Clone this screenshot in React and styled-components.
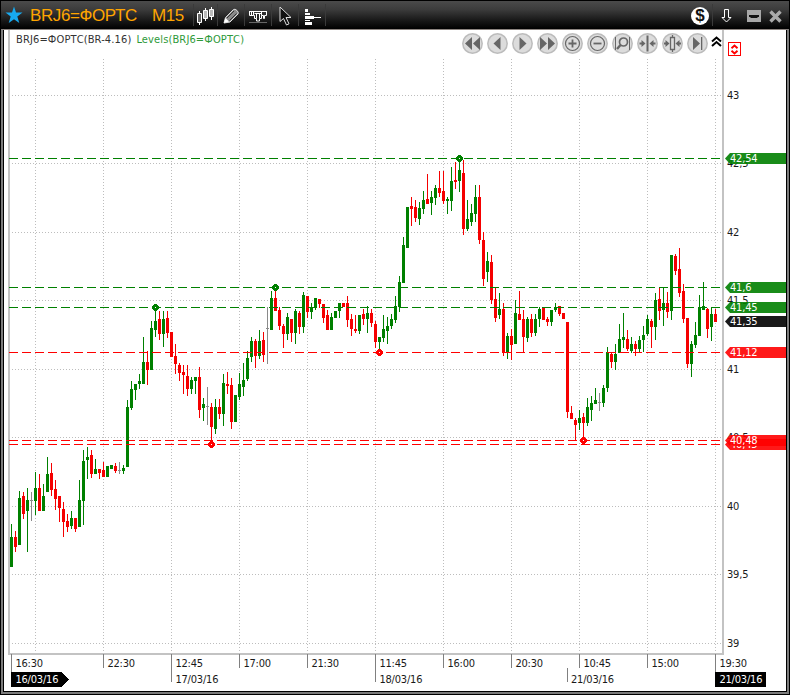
import React from 'react'
import styled, { createGlobalStyle } from 'styled-components'

const COLORS = {
  up: '#008000',
  down: '#f50000',
  flat: '#8a8a8a',
  grid: '#bdbdbd',
  axis: '#c3c3c3',
  orange: '#ffa500',
}

const GlobalStyle = createGlobalStyle`
  body {
    margin: 0;
    background: #000;
  }
  * {
    box-sizing: border-box;
  }
`

const Frame = styled.div`
  width: 790px;
  height: 695px;
  padding: 1px;
  background: #000;
  font-family: 'DejaVu Sans Condensed', 'DejaVu Sans', sans-serif;
`

const TitleBar = styled.header`
  display: flex;
  align-items: center;
  height: 28px;
  padding: 0 7px 0 4px;
  background: linear-gradient(#4b4b4b 0%, #3c3c3c 30%, #1c1c1c 65%, #000 100%);
`

const Title = styled.span`
  width: ${props => props.$width}px;
  margin-left: ${props => props.$gap}px;
  padding-top: 2px;
  color: ${COLORS.orange};
  font: 17px/28px 'Liberation Sans', Arial, sans-serif;
  letter-spacing: ${props => props.$spacing}px;
  white-space: nowrap;
`

const ToolCell = styled.div`
  display: flex;
  align-items: center;
  justify-content: center;
  width: ${props => props.$width || 27}px;
  height: 22px;
  padding-top: 2px;
  border-left: 1px solid #3a3a3a;
`

const Spacer = styled.div`
  flex: 1;
`

const WindowButtons = styled.div`
  display: flex;
  align-items: center;
  gap: 8px;
  margin-left: 7px;
  padding-top: 2px;
`

const Body = styled.main`
  position: relative;
  height: 665px;
  border: 2px solid #7c7c7c;
  border-top: 1px solid #8c8480;
  padding: 0 1px 1px;
`

const Sheet = styled.div`
  height: 661px;
  background: #fff;
`

const Legend = styled.div`
  position: absolute;
  top: 2px;
  left: 13px;
  display: flex;
  gap: 5px;
  font-size: 11px;
  line-height: 16px;
  white-space: nowrap;
`

const LegendItem = styled.span`
  color: ${props => props.$color};
  letter-spacing: ${props => props.$spacing}px;
`

const Controls = styled.div`
  position: absolute;
  top: 3px;
  left: 459px;
  display: flex;
  align-items: flex-start;
`

const RoundButton = styled.button`
  display: block;
  width: 21px;
  height: 21px;
  margin: 0 4px 0 0;
  padding: 0;
  border: 0;
  background: none;
`

const Collapse = styled.svg`
  margin: 3px 0 0 -1px;
`

const AxisText = styled.text`
  fill: ${props => props.$color || '#1a1a1a'};
  font-size: 11px;
  letter-spacing: -0.2px;
`

const PLOT_BOTTOM = 653
const TOP_PRICE = 43
const TOP_Y = 95
const POINTS_PER_UNIT = 137

const priceToY = price => Math.floor(TOP_Y + (TOP_PRICE - price) * POINTS_PER_UNIT + 0.3)

// g - up, r - down, n - unchanged; then high, body top, body bottom, low
const CANDLES = `
g524,537,567,567 r531,537,547,552 g491,498,545,545 r492,496,514,519 g488,500,511,552
n492,500,501,521 g472,488,501,515 r474,488,511,511 g484,496,511,511 g457,474,492,492
r463,473,490,496 r480,489,499,510 r496,496,508,522 r502,509,522,537 r514,521,527,532
g511,518,526,529 r518,518,529,532 g480,500,527,527 g450,461,501,525 g447,457,460,479
r450,455,474,478 g459,469,474,474 r469,469,473,479 r462,470,477,477 g466,466,477,477
g465,465,469,469 r463,466,471,473 n462,470,471,474 g465,468,471,474 g400,407,467,467
g381,389,408,410 g384,384,390,400 g374,381,384,389 g337,362,384,384 r351,362,370,385
g321,328,370,370 g307,321,330,337 r311,319,334,340 g311,319,334,347 r311,318,333,338
r332,332,357,357 r344,356,364,374 r363,365,373,381 r365,372,375,394 r365,376,389,396
g377,380,389,394 g377,377,381,394 r367,377,410,418 g398,404,408,421 n387,406,407,425
r403,407,427,443 g399,407,429,434 r399,407,414,419 g374,383,414,426 r372,384,386,394
r378,385,422,429 g395,395,422,422 g373,384,397,400 g363,380,387,396 g351,358,379,381
g337,341,357,362 r339,341,356,368 g330,341,356,359 r332,340,355,362 n307,328,329,364
g291,298,330,330 r287,298,311,311 r307,310,326,330 r324,326,334,348 g313,317,334,340
r319,319,333,342 g309,311,333,344 r311,313,327,334 g292,295,327,333 r296,296,312,318
g303,307,312,319 g298,298,308,310 r299,299,304,308 r304,304,318,323 r310,315,330,330
g313,317,330,330 g311,311,318,318 g303,303,311,318 r303,303,307,307 r296,303,320,327
r314,319,329,336 r315,329,331,333 g315,315,331,334 r309,314,319,325 g306,313,319,333
r309,313,323,327 r321,324,342,348 g337,337,342,352 g315,329,338,342 g317,326,331,344
g314,319,326,329 g296,306,320,323 g276,282,307,312 g237,245,283,283 g207,207,248,248
r197,206,209,226 r200,207,218,222 g202,208,219,225 g191,200,209,214 r174,199,204,204
g191,197,203,215 g185,188,198,205 r171,188,193,197 r171,191,201,204 g197,199,201,214
g167,181,201,211 r162,180,182,189 g158,170,181,192 r160,173,229,235 g200,219,229,231
g204,213,222,226 g185,197,214,222 r185,197,240,244 r232,240,279,286 g252,261,272,282
r255,262,300,304 r288,299,318,322 g293,309,315,319 r303,309,353,356 g333,336,352,359
r329,336,345,360 g300,313,344,344 r291,314,320,320 r310,319,337,352 g317,319,338,342
r314,319,333,337 g314,319,333,336 g307,309,319,327 r307,307,320,320 r317,319,322,326
g310,310,322,326 g303,307,310,312 r306,306,314,316 r313,313,319,319 r322,322,412,418
r406,413,419,419 r418,420,425,440 g410,418,423,430 r413,417,423,440 g398,407,423,426
g396,403,410,421 g388,400,404,404 n393,402,403,411 g385,388,403,407 g347,352,388,392
r353,354,362,368 g344,354,362,370 g324,339,353,353 g313,337,340,348 r330,339,349,351
g337,344,351,353 r341,344,349,356 g336,340,349,352 g326,335,340,352 g315,319,334,336
r319,321,327,348 g293,300,327,340 r287,299,311,320 g287,303,310,326 r292,303,312,318
g255,255,311,320 r254,256,271,275 r248,269,293,297 r284,291,319,323 r318,318,364,368
g341,344,364,377 g322,335,345,348 g295,307,336,336 g282,306,310,310 r308,309,329,338
g308,314,327,341 r309,314,322,322
`.trim().split(/\s+/).map(item => {
  const [high, top, bottom, low] = item.slice(1).split(',').map(Number)
  return { kind: item[0], high, top, bottom, low }
})

const CANDLE_COLORS = { g: COLORS.up, r: COLORS.down, n: COLORS.flat }

const PRICES = [43, 42.5, 42, 41.5, 41, 40.5, 40, 39.5, 39]
const GRID_X = [35, 103, 171, 239, 307, 375, 443, 511, 579, 647, 715]

const LEVELS = [
  { price: 42.54, color: '#008000', x: 459 },
  { price: 41.6, color: '#008000', x: 275 },
  { price: 41.45, color: '#008000', x: 155 },
  { price: 41.35, color: '#000000', noLine: true },
  { price: 41.12, color: '#ff0000', x: 379 },
  { price: 40.45, color: '#ff0000', x: 211 },
  { price: 40.48, color: '#ff0000', x: 583 },
]

const TIMES = [
  { x: 11, time: '16:30' },
  { x: 103, time: '22:30' },
  { x: 171, time: '12:45', date: '17/03/16' },
  { x: 239, time: '17:00' },
  { x: 307, time: '21:30' },
  { x: 375, time: '11:45', date: '18/03/16' },
  { x: 443, time: '16:00' },
  { x: 511, time: '20:30' },
  { x: 579, time: '10:45' },
  { x: 647, time: '15:00' },
  { x: 715, time: '19:30' },
]

const formatPrice = price => String(price).replace('.', ',')

const Grid = () => (
  <g stroke={COLORS.grid} strokeDasharray="1 2">
    {PRICES.map(price => (
      <line key={price} x1="9" x2="722" y1={priceToY(price) + 0.5} y2={priceToY(price) + 0.5} />
    ))}
    {GRID_X.map(x => (
      <line key={x} x1={x + 0.5} x2={x + 0.5} y1="59" y2={PLOT_BOTTOM} />
    ))}
  </g>
)

const Candle = ({ x, kind, high, top, bottom, low }) => (
  <g fill={CANDLE_COLORS[kind]}>
    <rect x={x} y={high} width="1" height={low - high} />
    <rect x={x - 1} y={top} width="3" height={bottom - top} />
  </g>
)

const LevelLine = ({ price, color, x }) => {
  const y = priceToY(price)
  return (
    <g>
      <line x1="9" x2="722" y1={y + 0.5} y2={y + 0.5} stroke={color} strokeDasharray="9 4" />
      <path d={`M${x - 1} ${y - 3}h3v1h1v1h1v3h-1v1h-1v1h-3v-1h-1v-1h-1v-3h1v-1h1z`} fill={color} />
      <rect x={x} y={y} width="1" height="1" fill="#fff" />
    </g>
  )
}

const PriceTag = ({ price, color }) => {
  const y = priceToY(price)
  return (
    <g>
      <path d={`M725 ${y + 0.5}l5 -5.5h56v11h-56z`} fill={color} fillOpacity="0.9" />
      <AxisText x="730" y={y + 4} $color="#fff">{formatPrice(price)}</AxisText>
    </g>
  )
}

const TimeAxis = () => (
  <g shapeRendering="crispEdges">
    {TIMES.map(({ x, time, date }) => (
      <g key={x}>
        <rect x={x} y="654" width="1" height={date ? 28 : 14} fill="#808080" />
        <AxisText x={x + 4.4} y="667">{time}</AxisText>
        {date && <AxisText x={x + 4.4} y="683">{date}</AxisText>}
      </g>
    ))}
    <rect x="11" y="668" width="1" height="4" fill="#808080" />
    <rect x="715" y="668" width="1" height="4" fill="#808080" />
    <rect x="567" y="668" width="1" height="14" fill="#808080" />
    <AxisText x="571" y="683">21/03/16</AxisText>
    <path d="M11 672h51l7 7.5l-7 7.5h-51z" fill="#000" />
    <AxisText x="15.4" y="683" $color="#fff">16/03/16</AxisText>
    <rect x="715" y="672" width="51" height="15" fill="#000" />
    <AxisText x="719.4" y="683" $color="#fff">21/03/16</AxisText>
  </g>
)

const Chart = () => (
  <svg width="782" height="661" viewBox="4 30 782 661" display="block">
    <Grid />
    <path d="M8 30h2v623h712v-623h2v625h-716z" fill={COLORS.axis} />
    <g shapeRendering="crispEdges">
      {CANDLES.map((candle, i) => <Candle key={i} x={11 + i * 4} {...candle} />)}
    </g>
    {LEVELS.filter(level => !level.noLine).map(level => <LevelLine key={level.price} {...level} />)}
    {PRICES.map(price => (
      <AxisText key={price} x="727" y={priceToY(price) + 4}>{formatPrice(price)}</AxisText>
    ))}
    {LEVELS.map(level => <PriceTag key={level.price} {...level} />)}
    <TimeAxis />
    <g fill="none" stroke="#f00">
      <rect x="728.5" y="42.5" width="12" height="13" />
      <path d="M731.5 48.300l3 -2.800l3 2.800M731.5 50.700l3 2.800l3 -2.800" strokeWidth="1.9" />
    </g>
  </svg>
)

const GLYPHS = {
  rewind: <path d="M10 4v13L3 10.500zM18 4v13L11 10.500z" />,
  back: <path d="M13.500 4v13L6.500 10.500z" />,
  forward: <path d="M7.500 4v13L14.500 10.500z" />,
  fastForward: <path d="M3 4v13L10 10.500zM11 4v13L18 10.500z" />,
  zoomIn: (
    <g fill="none" stroke="#666">
      <circle cx="10.5" cy="10.5" r="7" strokeWidth="1.2" />
      <path d="M6.500 10.500h8M10.500 6.500v8" strokeWidth="1.8" />
    </g>
  ),
  zoomOut: (
    <g fill="none" stroke="#666">
      <circle cx="10.5" cy="10.5" r="7" strokeWidth="1.2" />
      <path d="M6.500 10.500h8" strokeWidth="1.8" />
    </g>
  ),
  zoomArea: (
    <g fill="none" stroke="#666">
      <path d="M3.500 4v13M17.500 4v13" />
      <circle cx="11.500" cy="9" r="4" strokeWidth="1.7" />
      <path d="M8.500 12l-3.500 4" strokeWidth="2.4" />
    </g>
  ),
  squeeze: (
    <>
      <path d="M9.500 2.500h2v16h-2z" />
      <path d="M2.500 9.500h2v-2.500l4 3.500l-4 3.500v-2.500h-2zM18.500 9.500h-2v-2.500l-4 3.500l4 3.500v-2.500h2z" />
    </>
  ),
  squeezeBar: (
    <>
      <path d="M8.500 4.500h4v12h-4zM10.500 2v2.500M10.500 16.500v2.500" fill="none" stroke="#666" strokeWidth="1.300" />
      <path d="M2 9.500h1.500v-2.500l4 3.500l-4 3.500v-2.500h-1.500zM19 9.500h-1.500v-2.500l-4 3.500l4 3.500v-2.500h1.500z" />
    </>
  ),
  toEnd: <path d="M6 4v13L13 10.500zM14 4h1.300v13h-1.300z" />,
}

const NavButton = ({ name }) => (
  <RoundButton aria-label={name}>
    <svg width="21" height="21" display="block">
      <circle cx="10.500" cy="10.500" r="9.700" fill="#dcdcdc" stroke="#bcbcbc" strokeWidth="1.500" />
      <g fill="#666">{GLYPHS[name]}</g>
    </svg>
  </RoundButton>
)

const CollapseIcon = () => (
  <Collapse width="11" height="11" viewBox="0 0 11 11" fill="none" stroke="#000" strokeWidth="2">
    <path d="M1 5.500L5.500 1.500L10 5.500M1 10L5.500 6L10 10" />
  </Collapse>
)

const StarIcon = () => (
  <svg width="18" height="18" viewBox="0 0 18 18">
    <path d="M9 .5l2 6h6.500l-5.200 4l2 6.500l-5.300-3.800l-5.300 3.800l2-6.500l-5.200-4h6.500z" fill="#17aaf0" />
  </svg>
)

const CandlesIcon = () => (
  <svg width="17" height="18" viewBox="0 0 17 18" fill="#666" stroke="#fff">
    <path d="M2.500 4v14M8.500 1v13M14.500 0v13" />
    <path d="M.5 6.500h4v9h-4z" />
    <path d="M6.500 3.500h4v8h-4zM12.500 2.500h4v7h-4z" fill="#bbb" />
  </svg>
)

const PencilIcon = () => (
  <svg width="16" height="16" viewBox="0 0 16 16">
    <path d="M1 15l1.500-5.500l8-8q1.500-1 3.500 1t1 3.500l-8 8z" fill="#8a8a8a" stroke="#ddd" />
    <path d="M4 10l7-7M6.500 12.500l7-7" stroke="#333" />
    <path d="M1 15l1.500-5l3.500 3.500z" fill="#fff" />
  </svg>
)

const ProfileIcon = () => (
  <svg width="18" height="13" viewBox="0 0 18 13" fill="none" stroke="#fff">
    <path d="M0 1.500h18M.5 1v4.500h4v-4M2.500 1.500v4M4.500 5.500h1v3h2v2.500h3v-2.500h2v-3M7.500 3.500v5M10.500 3.500v5M5.500 3.500h7M12.500 1.500v4h2v3h1v-3h2v-4.500" />
    <path d="M0 12.500h18" stroke="#666" />
  </svg>
)

const CursorIcon = () => (
  <svg width="13" height="20" viewBox="0 0 13 20">
    <path d="M1 1v14.500l3.500-3l3 6.500l2.500-1.200l-3-6.300h5z" fill="#111" stroke="#ddd" />
  </svg>
)

const VolumeIcon = () => (
  <svg width="17" height="17" viewBox="0 0 17 17" fill="#fff">
    <path d="M1 1h3v3h-3zM1 5h5v2h-5zM1 8h9v1h7v1h-7v1h-9zM1 12h5v1h-5zM1 14h7v3h-7z" />
  </svg>
)

const DollarBadge = styled.span`
  width: 18px;
  height: 18px;
  margin: 2px 3px 0 0;
  border-radius: 50%;
  background: #fff;
  color: #111;
  font: bold 17px/18px 'Liberation Sans', Arial, sans-serif;
  text-align: center;
`

const DownIcon = () => (
  <svg width="11" height="14" viewBox="0 0 11 14" fill="none" stroke="#fff">
    <path d="M3.500 .5h4v8h2.500l-4.500 4.500l-4.500-4.500h2.500z" />
  </svg>
)

const MaximizeIcon = () => (
  <svg width="14" height="12" viewBox="0 0 14 12">
    <rect x="1" y="1" width="12" height="10" fill="#111" stroke="#a8a8a8" strokeWidth="2" />
    <path d="M2 3.500h10M2 8.500h10" stroke="#a8a8a8" strokeWidth="3" />
    <path d="M3.500 6.500h7" stroke="#111" strokeWidth="3" />
  </svg>
)

const CloseIcon = () => (
  <svg width="13" height="13" viewBox="0 0 13 13">
    <path d="M1.500 1.500l10 10M11.500 1.500l-10 10" stroke="#aaa" strokeWidth="3.400" />
  </svg>
)

const App = () => (
  <>
    <GlobalStyle />
    <Frame>
      <TitleBar>
        <StarIcon />
        <Title $width={114} $gap={7} $spacing={-0.4}>BRJ6=ФОРТС</Title>
        <Title $width={41} $gap={8} $spacing={-0.4}>M15</Title>
        <ToolCell $width={24}><CandlesIcon /></ToolCell>
        <ToolCell><PencilIcon /></ToolCell>
        <ToolCell><ProfileIcon /></ToolCell>
        <ToolCell><CursorIcon /></ToolCell>
        <ToolCell><VolumeIcon /></ToolCell>
        <ToolCell />
        <Spacer />
        <DollarBadge>$</DollarBadge>
        <ToolCell $width={28}><DownIcon /></ToolCell>
        <WindowButtons>
          <MaximizeIcon />
          <CloseIcon />
        </WindowButtons>
      </TitleBar>
      <Body>
        <Sheet>
          <Chart />
        </Sheet>
        <Legend>
          <LegendItem $color="#333" $spacing={0.13}>BRJ6=ФОРТС(BR-4.16)</LegendItem>
          <LegendItem $color="#2e9a3a" $spacing={0.13}>Levels(BRJ6=ФОРТС)</LegendItem>
        </Legend>
        <Controls>
          {Object.keys(GLYPHS).map(name => <NavButton key={name} name={name} />)}
          <CollapseIcon />
        </Controls>
      </Body>
    </Frame>
  </>
)

export default App
